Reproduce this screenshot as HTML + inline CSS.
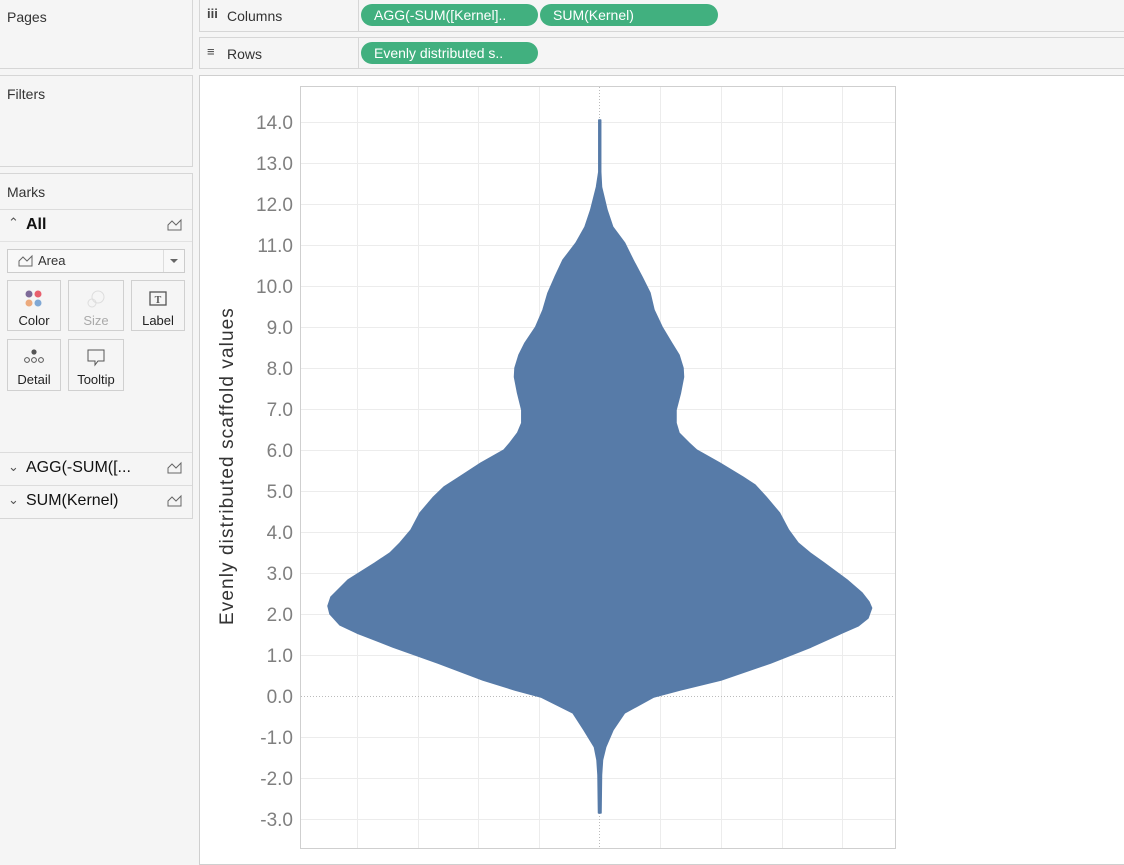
<!DOCTYPE html>
<html><head><meta charset="utf-8"><style>
body{margin:0;width:1124px;height:863px;background:#f5f5f5;font-family:"Liberation Sans",sans-serif;overflow:hidden;position:relative}
.a{position:absolute;box-sizing:border-box}
.box{border:1px solid #d6d6d6;background:#f5f5f5}
.t{font-size:14px;color:#333}
.pill{background:#41b07f;color:#fff;font-size:14px;border-radius:11px;height:22px;line-height:22px;padding-left:13px}
.btn{border:1px solid #d0d0d0;background:#f5f5f5;font-size:13px;color:#222;text-align:center}
</style></head><body>
<div class="a box" style="left:-1px;top:-1px;width:194px;height:70px"></div>
<div class="a t" style="left:7px;top:9px">Pages</div>
<div class="a box" style="left:-1px;top:75px;width:194px;height:92px"></div>
<div class="a t" style="left:7px;top:86px">Filters</div>
<div class="a box" style="left:-1px;top:173px;width:194px;height:346px"></div>
<div class="a t" style="left:7px;top:184px">Marks</div>
<div class="a" style="left:0;top:209px;width:192px;height:1px;background:#dcdcdc"></div>
<div class="a" style="left:8px;top:215px;font-size:13px;color:#555">&#8963;</div>
<div class="a" style="left:26px;top:216px;font-size:16px;font-weight:bold;color:#111">All</div>
<svg class="a" style="left:167px;top:218px" width="16" height="13"><path d="M1 12V7l4-4 4 4 5-5v10z" fill="none" stroke="#666" stroke-width="1"/></svg>
<div class="a" style="left:0;top:241px;width:192px;height:1px;background:#e2e2e2"></div>
<div class="a" style="left:7px;top:249px;width:178px;height:24px;border:1px solid #ccc;background:#f8f8f8"></div>
<svg class="a" style="left:18px;top:254px" width="16" height="13"><path d="M1 12V7l4-4 4 4 5-5v10z" fill="none" stroke="#666"/></svg>
<div class="a" style="left:38px;top:253px;font-size:13px;color:#333">Area</div>
<div class="a" style="left:163px;top:250px;width:1px;height:22px;background:#ddd"></div>
<div class="a" style="left:170px;top:259px;width:0;height:0;border-left:4px solid transparent;border-right:4px solid transparent;border-top:4px solid #666"></div>
<div class="a btn" style="left:7px;top:280px;width:54px;height:51px"><svg width="20" height="20" style="margin-top:8px"><circle cx="5" cy="5" r="3.5" fill="#7d6a98"/><circle cx="14" cy="5" r="3.5" fill="#e8606e"/><circle cx="5" cy="14" r="3.5" fill="#ecaa7d"/><circle cx="14" cy="14" r="3.5" fill="#80a8d4"/></svg><div style="margin-top:1px">Color</div></div>
<div class="a btn" style="left:68px;top:280px;width:56px;height:51px;color:#aaa"><svg width="22" height="20" style="margin-top:8px"><circle cx="13" cy="8" r="6" fill="none" stroke="#ddd"/><circle cx="7" cy="14" r="4" fill="none" stroke="#ddd"/></svg><div style="margin-top:1px">Size</div></div>
<div class="a btn" style="left:131px;top:280px;width:54px;height:51px"><svg width="20" height="20" style="margin-top:8px"><rect x="2" y="3" width="16" height="13" fill="none" stroke="#555" stroke-width="1.3"/><text x="10" y="14" font-size="10" text-anchor="middle" font-family="Liberation Serif" font-weight="bold" fill="#555">T</text></svg><div style="margin-top:1px">Label</div></div>
<div class="a btn" style="left:7px;top:339px;width:54px;height:52px"><svg width="22" height="20" style="margin-top:8px"><circle cx="11" cy="4" r="2.6" fill="#555"/><circle cx="4" cy="12" r="2.4" fill="none" stroke="#555"/><circle cx="11" cy="12" r="2.4" fill="none" stroke="#555"/><circle cx="18" cy="12" r="2.4" fill="none" stroke="#555"/></svg><div style="margin-top:1px">Detail</div></div>
<div class="a btn" style="left:68px;top:339px;width:56px;height:52px"><svg width="20" height="20" style="margin-top:8px"><path d="M2 2h16v11h-6l-3 4v-4H2z" fill="none" stroke="#555"/></svg><div style="margin-top:1px">Tooltip</div></div>
<div class="a" style="left:0;top:452px;width:192px;height:1px;background:#dcdcdc"></div>
<div class="a" style="left:8px;top:459px;font-size:13px;color:#555">&#8964;</div>
<div class="a" style="left:26px;top:459px;font-size:16px;color:#111">AGG(-SUM([...</div>
<svg class="a" style="left:167px;top:461px" width="16" height="13"><path d="M1 12V7l4-4 4 4 5-5v10z" fill="none" stroke="#666"/></svg>
<div class="a" style="left:0;top:485px;width:192px;height:1px;background:#dcdcdc"></div>
<div class="a" style="left:8px;top:492px;font-size:13px;color:#555">&#8964;</div>
<div class="a" style="left:26px;top:492px;font-size:16px;color:#111">SUM(Kernel)</div>
<svg class="a" style="left:167px;top:494px" width="16" height="13"><path d="M1 12V7l4-4 4 4 5-5v10z" fill="none" stroke="#666"/></svg>

<div class="a box" style="left:199px;top:-1px;width:930px;height:33px"></div>
<div class="a" style="left:358px;top:0;width:1px;height:31px;background:#d6d6d6"></div>
<div class="a" style="left:207px;top:6px;font-size:13px;color:#444;font-weight:bold;width:14px">iii</div>
<div class="a t" style="left:227px;top:8px">Columns</div>
<div class="a pill" style="left:361px;top:4px;width:177px">AGG(-SUM([Kernel]..</div>
<div class="a pill" style="left:540px;top:4px;width:178px">SUM(Kernel)</div>
<div class="a box" style="left:199px;top:37px;width:930px;height:32px"></div>
<div class="a" style="left:358px;top:38px;width:1px;height:30px;background:#d6d6d6"></div>
<div class="a" style="left:207px;top:44px;font-size:13px;color:#444">&#8801;</div>
<div class="a t" style="left:227px;top:46px">Rows</div>
<div class="a pill" style="left:361px;top:42px;width:177px">Evenly distributed s..</div>

<div class="a" style="left:199px;top:75px;width:930px;height:790px;background:#fff;border:1px solid #cfcfcf"></div>
<svg class="a" style="left:0;top:0" width="1124" height="863">
<g stroke="#ececec" stroke-width="1">
<line x1="301" x2="895" y1="122.5" y2="122.5"/><line x1="301" x2="895" y1="163.5" y2="163.5"/><line x1="301" x2="895" y1="204.5" y2="204.5"/><line x1="301" x2="895" y1="245.5" y2="245.5"/><line x1="301" x2="895" y1="286.5" y2="286.5"/><line x1="301" x2="895" y1="327.5" y2="327.5"/><line x1="301" x2="895" y1="368.5" y2="368.5"/><line x1="301" x2="895" y1="409.5" y2="409.5"/><line x1="301" x2="895" y1="450.5" y2="450.5"/><line x1="301" x2="895" y1="491.5" y2="491.5"/><line x1="301" x2="895" y1="532.5" y2="532.5"/><line x1="301" x2="895" y1="573.5" y2="573.5"/><line x1="301" x2="895" y1="614.5" y2="614.5"/><line x1="301" x2="895" y1="655.5" y2="655.5"/><line x1="301" x2="895" y1="737.5" y2="737.5"/><line x1="301" x2="895" y1="778.5" y2="778.5"/><line x1="301" x2="895" y1="819.5" y2="819.5"/>
<line x1="357.5" x2="357.5" y1="87" y2="848"/><line x1="418.5" x2="418.5" y1="87" y2="848"/><line x1="478.5" x2="478.5" y1="87" y2="848"/><line x1="539.5" x2="539.5" y1="87" y2="848"/><line x1="660.5" x2="660.5" y1="87" y2="848"/><line x1="721.5" x2="721.5" y1="87" y2="848"/><line x1="782.5" x2="782.5" y1="87" y2="848"/><line x1="842.5" x2="842.5" y1="87" y2="848"/>
</g>
<g stroke="#bbb" stroke-width="1" stroke-dasharray="1,2"><line x1="301" x2="895" y1="696.5" y2="696.5"/><line x1="599.5" x2="599.5" y1="87" y2="848"/></g>
<rect x="300.5" y="86.5" width="595" height="762" fill="none" stroke="#cfcfcf"/>
<path fill="#577ba8" stroke="#577ba8" stroke-width="1.5" stroke-linejoin="round" d="M598.8 120 L600.7 120 L600.7 172 L601.5 187 L607 210 L612.7 227 L624.6 243 L633 260 L642 277 L650 293 L654 310 L662 327 L671.6 343 L679 355 L683 368 L683.5 377 L680.4 393 L676 410 L676 423 L679 433 L689 443 L696.6 450 L719.7 463 L742.8 477 L755 485 L766 497 L779.5 513 L788.5 530 L798 543 L810 553 L824 563 L847 580 L862 593 L869 602 L871.6 608 L868 618 L858 626 L842 633 L811 647 L770.5 663 L721 680 L680 690 L653.7 697 L624.5 713 L613 730 L605.7 747 L602.5 760 L601.5 775 L601 813 L598.5 813 L598 775 L597 760 L594.4 747 L584 730 L573 713 L541 697 L515 690 L483 680 L438 663 L393 647 L357 633 L340 625 L330 614 L328 606 L331 597 L348 580 L375 563 L390 553 L400 543 L411 530 L420 513 L433.6 497 L444 487 L458 478 L481 463 L504 450 L510 443 L517.6 433 L521.8 423 L521.8 410 L517.6 393 L514.5 377 L515 368 L519 355 L525 343 L535.7 327 L543 310 L548 293 L555 277 L563 260 L576 243 L585 227 L590.7 210 L596.5 187 L598.8 172 Z"/>
<g font-size="19" fill="#7f7f7f" text-anchor="end" font-family="Liberation Sans">
<text x="293" y="129">14.0</text><text x="293" y="170">13.0</text><text x="293" y="211">12.0</text><text x="293" y="252">11.0</text><text x="293" y="293">10.0</text><text x="293" y="334">9.0</text><text x="293" y="375">8.0</text><text x="293" y="416">7.0</text><text x="293" y="457">6.0</text><text x="293" y="498">5.0</text><text x="293" y="539">4.0</text><text x="293" y="580">3.0</text><text x="293" y="621">2.0</text><text x="293" y="662">1.0</text><text x="293" y="703">0.0</text><text x="293" y="744">-1.0</text><text x="293" y="785">-2.0</text><text x="293" y="826">-3.0</text>
</g>
<text transform="translate(233,466) rotate(-90)" text-anchor="middle" font-size="19" fill="#333" font-family="Liberation Sans" letter-spacing="1.2" textLength="318" lengthAdjust="spacing">Evenly distributed scaffold values</text>
</svg>
</body></html>
